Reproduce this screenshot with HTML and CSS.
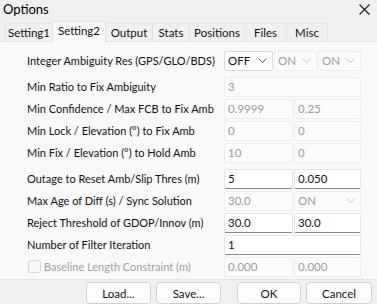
FILE: index.html
```html
<!DOCTYPE html>
<html>
<head>
<meta charset="utf-8">
<link rel="stylesheet" href="styles.css">
</head>
<body>
<div class="window">
  <div class="titlebar">
    <span class="title">Options</span>
    <svg class="close" width="11" height="11" viewBox="0 0 11 11"><path d="M0.5 0.5 L10.5 10.5 M10.5 0.5 L0.5 10.5" stroke="#1a1a1a" stroke-width="1.1" fill="none"/></svg>
  </div>
  <div class="tabs">
    <div class="tab t1">Setting1</div>
    <div class="tab t2 active">Setting2</div>
    <div class="tab t3">Output</div>
    <div class="tab t4">Stats</div>
    <div class="tab t5">Positions</div>
    <div class="tab t6">Files</div>
    <div class="tab t7">Misc</div>
  </div>
  <div class="page">
    <div class="row">
      <div class="label">Integer Ambiguity Res (GPS/GLO/BDS)</div>
      <div class="ctl three">
        <div class="combo c-wide"><span>OFF</span><svg class="chev" width="9" height="5" viewBox="0 0 9 5"><path d="M0.5 0.5 L4.5 4.5 L8.5 0.5" stroke="#606060" fill="none"/></svg></div>
        <div class="combo dis"><span>ON</span><svg class="chev" width="9" height="5" viewBox="0 0 9 5"><path d="M0.5 0.5 L4.5 4.5 L8.5 0.5" stroke="#c4c4c4" fill="none"/></svg></div>
        <div class="combo dis"><span>ON</span><svg class="chev" width="9" height="5" viewBox="0 0 9 5"><path d="M0.5 0.5 L4.5 4.5 L8.5 0.5" stroke="#c4c4c4" fill="none"/></svg></div>
      </div>
    </div>
    <div class="row gap-top">
      <div class="label">Min Ratio to Fix Ambiguity</div>
      <div class="ctl one"><div class="field dis">3</div></div>
    </div>
    <div class="row">
      <div class="label">Min Confidence / Max FCB to Fix Amb</div>
      <div class="ctl two"><div class="field dis">0.9999</div><div class="field dis">0.25</div></div>
    </div>
    <div class="row">
      <div class="label">Min Lock / Elevation (°) to Fix Amb</div>
      <div class="ctl two"><div class="field dis">0</div><div class="field dis">0</div></div>
    </div>
    <div class="row">
      <div class="label">Min Fix / Elevation (°) to Hold Amb</div>
      <div class="ctl two"><div class="field dis">10</div><div class="field dis">0</div></div>
    </div>
    <div class="row gap-top">
      <div class="label">Outage to Reset Amb/Slip Thres (m)</div>
      <div class="ctl two"><div class="field">5</div><div class="field">0.050</div></div>
    </div>
    <div class="row">
      <div class="label">Max Age of Diff (s) / Sync Solution</div>
      <div class="ctl two"><div class="field dis">30.0</div><div class="combo dis"><span>ON</span><svg class="chev" width="9" height="5" viewBox="0 0 9 5"><path d="M0.5 0.5 L4.5 4.5 L8.5 0.5" stroke="#c4c4c4" fill="none"/></svg></div></div>
    </div>
    <div class="row">
      <div class="label">Reject Threshold of GDOP/Innov (m)</div>
      <div class="ctl two"><div class="field">30.0</div><div class="field">30.0</div></div>
    </div>
    <div class="row">
      <div class="label">Number of Filter Iteration</div>
      <div class="ctl one"><div class="field">1</div></div>
    </div>
    <div class="row">
      <div class="label check-label"><span class="checkbox"></span><span class="dis-text">Baseline Length Constraint (m)</span></div>
      <div class="ctl two"><div class="field dis">0.000</div><div class="field dis">0.000</div></div>
    </div>
  </div>
  <div class="footer">
    <div class="btn b-load">Load...</div>
    <div class="btn b-save">Save...</div>
    <div class="btn b-ok">OK</div>
    <div class="btn b-cancel">Cancel</div>
  </div>
</div>
</body>
</html>
```
FILE: styles.css
```css
* { box-sizing: border-box; }
html, body { margin: 0; padding: 0; }
body {
  width: 377px;
  height: 304px;
  overflow: hidden;
  font-family: Lato, "Noto Sans", sans-serif;
  font-size: 11px;
  color: #111111;
  background: #f0f0f0;
}
.window {
  width: 377px;
  height: 304px;
  display: flex;
  flex-direction: column;
  background: #f0f0f0;
}
.titlebar {
  height: 21px;
  display: flex;
  align-items: center;
  justify-content: space-between;
  padding: 0 7px 2px 3px;
}
.title { font-size: 13px; color: #000; }
.tabs {
  height: 21px;
  display: flex;
  align-items: flex-end;
  padding-left: 5px;
  border-bottom: 1px solid #e3e3e3;
}
.tab {
  height: 18px;
  display: flex;
  align-items: center;
  justify-content: center;
  background: #f0f0f0;
  border: 1px solid #e3e3e3;
  border-bottom: none;
  border-left: none;
  color: #111111;
  padding-top: 1px;
  font-size: 11.5px;
}
.t1 { width: 48px; border-left: 1px solid #e3e3e3; }
.t2 { width: 54px; }
.t3 { width: 47px; }
.t4 { width: 37px; }
.t5 { width: 55px; }
.t6 { width: 42px; }
.t7 { width: 41px; }
.tab.active {
  height: 21px;
  background: #f9f9f9;
  border-left: 1px solid #e3e3e3;
  margin-left: -1px;
  margin-bottom: -1px;
  padding-top: 0;
  padding-bottom: 3px;
  position: relative;
}
.page {
  height: 241px;
  background: #f9f9f9;
  padding: 9px 0 0 27px;
  display: flex;
  flex-direction: column;
  gap: 2px;
}
.row {
  display: grid;
  grid-template-columns: 197px 137px;
  height: 20px;
  align-items: center;
}
.row.gap-top { margin-top: 4px; }
.label { white-space: nowrap; line-height: 20px; }
.check-label { display: flex; align-items: center; gap: 3px; margin-left: 1px; }
.checkbox {
  width: 13px; height: 13px;
  border: 1px solid #d6d6d6;
  border-radius: 3px;
  background: #f7f7f7;
}
.dis-text { color: #a0a0a0; }
.ctl { display: grid; height: 20px; gap: 1px; }
.ctl.one { grid-template-columns: 1fr; }
.ctl.two { grid-template-columns: 69px 67px; }
.ctl.three { grid-template-columns: 49px 43px 43px; gap: 1px; }
.field, .combo {
  height: 20px;
  border: 1px solid #e5e5e5;
  border-bottom-color: #8a8a8a;
  background: #ffffff;
  padding: 0 0 0 3px;
  line-height: 18px;
  color: #111111;
  border-radius: 2px;
  font-size: 11.5px;
}
.field.dis, .combo.dis {
  border-color: #ececec;
  background: #fbfbfb;
  color: #9a9a9a;
}
.combo {
  display: flex;
  align-items: center;
  justify-content: space-between;
  padding-right: 5px;
  border: 1px solid #d9d9d9;
}
.footer {
  flex: 1;
  border-top: 1px solid #e3e3e3;
  display: flex;
  align-items: flex-start;
  padding: 2px 0 0 86px;
  gap: 5px;
}
.btn {
  height: 22px;
  width: 65px;
  border: 1px solid #d0d0d0;
  border-radius: 4px;
  background: #fdfdfd;
  display: flex;
  align-items: center;
  justify-content: center;
  color: #111111;
  font-size: 11.5px;
}
.b-ok { margin-left: 11px; width: 64px; }
.b-cancel { width: 66px; }
```
